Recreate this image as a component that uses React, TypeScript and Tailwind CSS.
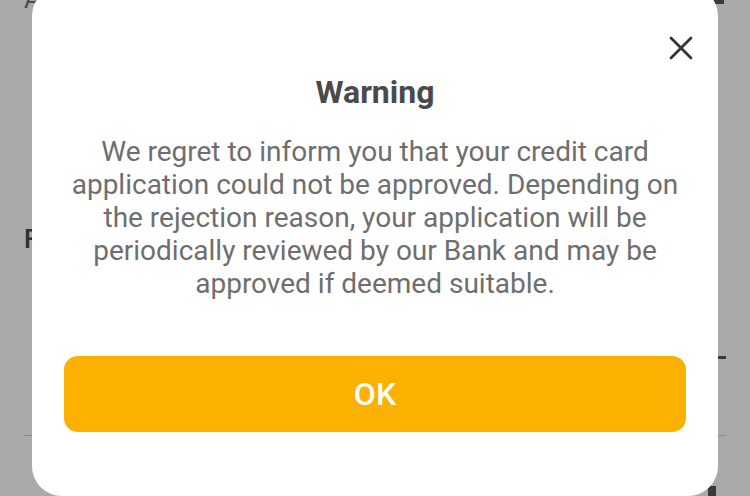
import React from "react";

export default function App() {
  return (
    <div
      className="relative h-[496px] w-[750px] overflow-hidden bg-[#a9a9a9]"
      style={{ fontFamily: "Roboto, 'Noto Sans', sans-serif" }}
    >
      {/* page behind the overlay */}
      <div className="absolute left-[24px] top-[-16px] text-[26px] leading-[30px] text-[#4d4d4d]">A</div>
      <div className="absolute left-[24px] top-[224px] text-[26px] leading-[30px] font-medium text-[#2f2f2f]">F</div>
      <div className="absolute right-[26px] top-0 h-[4px] w-[12px] bg-[#3a3a3a]" />
      <div className="absolute right-[24px] top-[356px] h-[3px] w-[10px] bg-[#3a3a3a]" />
      <div className="absolute left-[24px] right-[24px] top-[435px] h-px bg-[#8c8c8c]" />
      <div className="absolute right-[34px] bottom-0 h-[10px] w-[8px] bg-[#3a3a3a]" />

      {/* dialog */}
      <div className="absolute left-[32px] top-[-14px] flex h-[510px] w-[686px] flex-col items-center rounded-[30px] bg-white px-[32px] pt-[86px] pb-[64px]">
        <button className="absolute right-[22px] top-[47px] text-[#333333]">
          <svg width="30" height="30" viewBox="0 0 24 24" fill="none" stroke="currentColor" strokeWidth="2.2" strokeLinecap="round">
            <path d="M4 4l16 16M20 4L4 20" />
          </svg>
        </button>
        <h2 className="text-[32px] font-bold leading-[40px] text-[#4a4a4a]">Warning</h2>
        <p className="mt-[23px] w-[622px] text-center text-[28px] leading-[33px] text-[#6e6e6e]">
          We regret to inform you that your credit card application could not be approved. Depending on the rejection reason, your application will be periodically reviewed by our Bank and may be approved if deemed suitable.
        </p>
        <button className="mt-auto h-[76px] w-[622px] rounded-[14px] bg-[#fcb000] text-[32px] font-medium text-white">
          OK
        </button>
      </div>
    </div>
  );
}
